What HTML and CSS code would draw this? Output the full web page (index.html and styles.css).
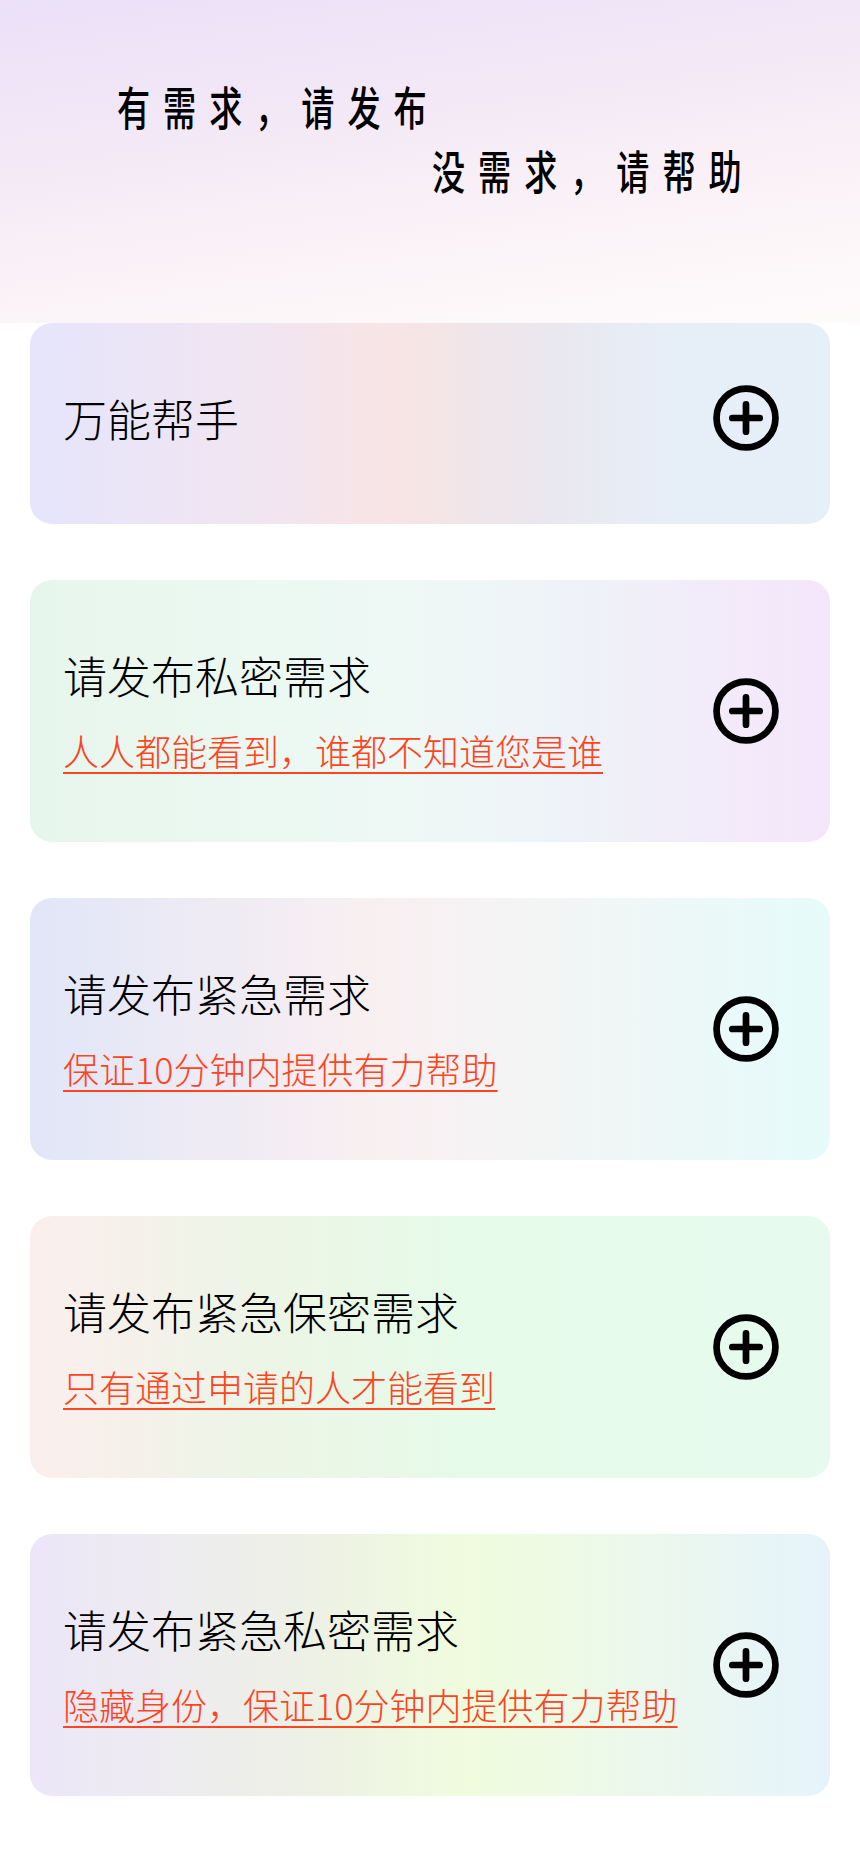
FILE: index.html
```html
<!DOCTYPE html>
<html lang="zh-CN">
<head>
  <meta charset="UTF-8" />
  <meta name="viewport" content="width=device-width, initial-scale=1.0"/>
  <title>发布需求</title>
  <link rel="stylesheet" href="styles.css">
</head>
<body>
  <header class="banner">
    <div class="slogan slogan-first"><span>有需求，请发布</span></div>
    <div class="slogan slogan-second"><span>没需求，请帮助</span></div>
  </header>

  <section class="options">
    <div class="option option-helper">
      <div class="option-text">
        <h2>万能帮手</h2>
      </div>
      <button class="add-btn" aria-label="添加">
        <svg viewBox="0 0 24 24" width="70" height="70"><circle cx="12" cy="12" r="10.1" fill="none" stroke="#000" stroke-width="2.3"/><path d="M12 7.3v9.4M7.3 12h9.4" stroke="#000" stroke-width="2.3" stroke-linecap="round"/></svg>
      </button>
    </div>

    <div class="option option-private">
      <div class="option-text">
        <h2>请发布私密需求</h2>
        <p>人人都能看到，谁都不知道您是谁</p>
      </div>
      <button class="add-btn" aria-label="添加">
        <svg viewBox="0 0 24 24" width="70" height="70"><circle cx="12" cy="12" r="10.1" fill="none" stroke="#000" stroke-width="2.3"/><path d="M12 7.3v9.4M7.3 12h9.4" stroke="#000" stroke-width="2.3" stroke-linecap="round"/></svg>
      </button>
    </div>

    <div class="option option-urgent">
      <div class="option-text">
        <h2>请发布紧急需求</h2>
        <p>保证10分钟内提供有力帮助</p>
      </div>
      <button class="add-btn" aria-label="添加">
        <svg viewBox="0 0 24 24" width="70" height="70"><circle cx="12" cy="12" r="10.1" fill="none" stroke="#000" stroke-width="2.3"/><path d="M12 7.3v9.4M7.3 12h9.4" stroke="#000" stroke-width="2.3" stroke-linecap="round"/></svg>
      </button>
    </div>

    <div class="option option-secret">
      <div class="option-text">
        <h2>请发布紧急保密需求</h2>
        <p>只有通过申请的人才能看到</p>
      </div>
      <button class="add-btn" aria-label="添加">
        <svg viewBox="0 0 24 24" width="70" height="70"><circle cx="12" cy="12" r="10.1" fill="none" stroke="#000" stroke-width="2.3"/><path d="M12 7.3v9.4M7.3 12h9.4" stroke="#000" stroke-width="2.3" stroke-linecap="round"/></svg>
      </button>
    </div>

    <div class="option option-hidden">
      <div class="option-text">
        <h2>请发布紧急私密需求</h2>
        <p>隐藏身份，保证10分钟内提供有力帮助</p>
      </div>
      <button class="add-btn" aria-label="添加">
        <svg viewBox="0 0 24 24" width="70" height="70"><circle cx="12" cy="12" r="10.1" fill="none" stroke="#000" stroke-width="2.3"/><path d="M12 7.3v9.4M7.3 12h9.4" stroke="#000" stroke-width="2.3" stroke-linecap="round"/></svg>
      </button>
    </div>
  </section>
</body>
</html>
```

FILE: styles.css
```css
* {
  margin: 0;
  padding: 0;
  box-sizing: border-box;
  font-family: "Noto Sans CJK SC", "Noto Sans", sans-serif;
}

body {
  background: #fff;
  color: #111;
  width: 860px;
}

.banner {
  height: 323px;
  padding-top: 73px;
  background: linear-gradient(172deg, #ebe1f9 0%, #f3e8f6 35%, #faf2f7 65%, #fefbfb 100%);
}

.slogan {
  height: 64px;
  line-height: 64px;
  font-size: 46px;
  font-weight: 500;
  color: #000;
  white-space: nowrap;
}

.slogan span {
  display: inline-block;
  letter-spacing: 18px;
  transform: scaleX(0.72);
  transform-origin: left center;
}

.slogan-first {
  padding-left: 117px;
}

.slogan-second {
  padding-left: 432px;
}

.options {
  display: flex;
  flex-direction: column;
  gap: 56px;
  padding: 0 30px 68px;
}

.option {
  height: 262px;
  border-radius: 22px;
  display: flex;
  align-items: center;
  justify-content: space-between;
  padding: 0 49px 0 33px;
}

.option-helper {
  height: 201px;
  padding-bottom: 12px;
  background: linear-gradient(to right, #e6e5fb 0%, #f1e5f2 28%, #f8e4e4 46%, #eae7ee 64%, #e6eef8 80%, #e6f0f9 100%);
}

.option-private {
  background: linear-gradient(to right, #e7f6ec 0%, #eef9f5 45%, #eef3f8 65%, #f5e6fb 100%);
}

.option-urgent {
  background: linear-gradient(to right, #e1e6f8 0%, #f9eff1 42%, #f3f5f5 65%, #e6fbfb 100%);
}

.option-secret {
  background: linear-gradient(to right, #fbeeed 0%, #ecf5e6 30%, #e6fbe9 55%, #e6fbee 100%);
}

.option-hidden {
  background: linear-gradient(to right, #ece6f9 0%, #eef2e4 38%, #f0fcde 55%, #e6f3fb 100%);
}

.option-text h2 {
  font-size: 44px;
  font-weight: 300;
  line-height: 50px;
  color: #000;
}

.option-text p {
  margin-top: 28px;
  font-size: 36px;
  font-weight: 300;
  line-height: 44px;
  color: #ff4422;
  text-decoration: underline;
  text-decoration-thickness: 2px;
  text-underline-offset: 6px;
}

.add-btn {
  background: none;
  border: none;
  width: 70px;
  height: 70px;
  cursor: pointer;
}

.add-btn svg {
  display: block;
}
```
